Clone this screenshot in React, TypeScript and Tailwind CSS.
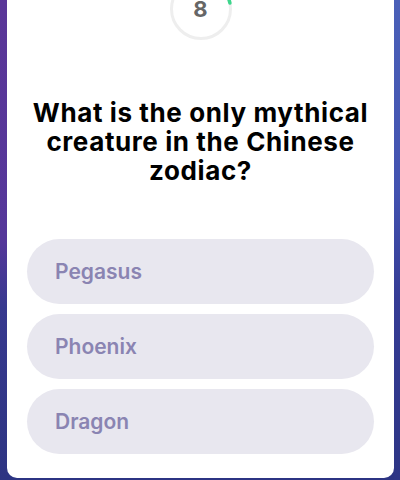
import React from 'react';

const options = ['Pegasus', 'Phoenix', 'Dragon'];

const Timer: React.FC<{ value: number }> = ({ value }) => {
    const r = 29.5;
    const c = 2 * Math.PI * r;
    const frac = 78 / 360;
    return (
        <div className="relative w-[62px] h-[62px] mt-[-22px]">
            <svg width="62" height="62" viewBox="0 0 62 62" className="absolute inset-0 -rotate-90">
                <circle cx="31" cy="31" r={r} fill="none" stroke="#eeeeee" strokeWidth="3" />
                <circle
                    cx="31"
                    cy="31"
                    r={r}
                    fill="none"
                    stroke="#3dd68c"
                    strokeWidth="3.5"
                    strokeLinecap="round"
                    strokeDasharray={`${c * frac} ${c}`}
                />
            </svg>
            <div className="absolute inset-0 flex items-center justify-center text-[22px] font-bold text-[#666666]">
                {value}
            </div>
        </div>
    );
};

export default function App() {
    return (
        <div
            className="w-[400px] h-[480px] overflow-hidden flex bg-[#2c3483]"
            style={{ fontFamily: 'Inter, "Noto Sans", sans-serif' }}
        >
            <div className="w-[7px] h-full bg-[linear-gradient(to_bottom,#5a3698_0%,#55379a_50%,#37398f_64%,#2d3482_100%)]" />
            <div className="flex-1 bg-white h-[478px] rounded-b-[10px] flex flex-col items-center">
                <Timer value={8} />
                <h1 className="mt-[58px] px-4 text-center text-[26px] leading-[29px] font-bold text-black tracking-[0.6px]">
                    What is the only mythical creature in the Chinese zodiac?
                </h1>
                <div className="mt-[54px] w-full px-5 flex flex-col gap-[10px]">
                    {options.map((opt) => (
                        <button
                            key={opt}
                            className="h-[65px] w-full rounded-full bg-[#e8e7ef] text-left pl-[28px] text-[21px] font-semibold text-[#8a84b2]"
                        >
                            {opt}
                        </button>
                    ))}
                </div>
            </div>
            <div className="w-[6px] h-full bg-[linear-gradient(to_bottom,#4a60b8_0%,#4252b0_40%,#353c95_62%,#2d3585_100%)]" />
        </div>
    );
}
